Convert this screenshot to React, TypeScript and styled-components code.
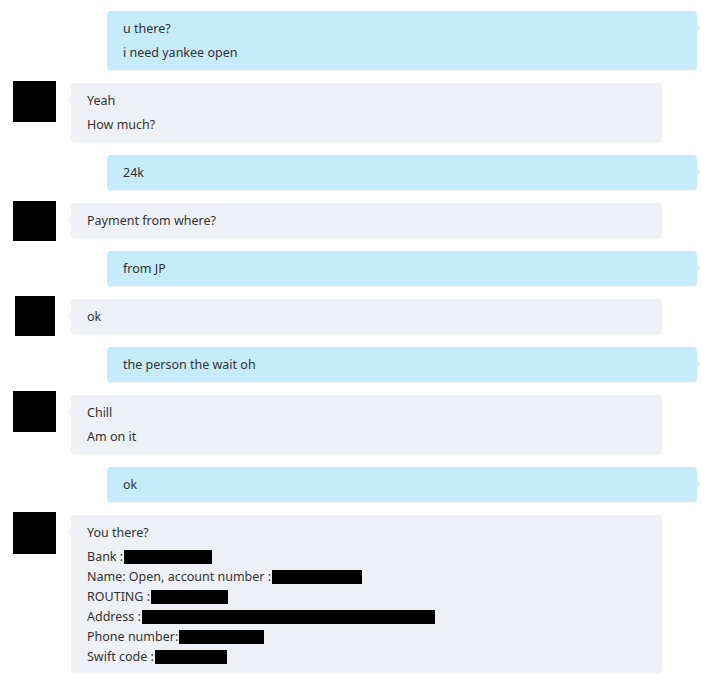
import React from "react";
import styled, { createGlobalStyle } from "styled-components";

const Global = createGlobalStyle`
  html, body { margin: 0; padding: 0; background: #ffffff; }
  body { font-family: "Noto Sans", "Open Sans", sans-serif; color: #333333; }
`;

const Thread = styled.div`
  display: flex;
  flex-direction: column;
  gap: 13px;
  padding-top: 11px;
  width: 708px;
`;

const OutRow = styled.div`
  display: flex;
  padding-left: 107px;
  width: 590px;
`;

const InRow = styled.div`
  display: grid;
  grid-template-columns: 71px 591px;
  align-items: start;
`;

const AvatarCell = styled.div`
  position: relative;
  height: 100%;
`;

const Avatar = styled.div<{ $x: number; $y: number; $w: number; $h: number }>`
  position: absolute;
  left: ${(p) => p.$x}px;
  top: ${(p) => p.$y}px;
  width: ${(p) => p.$w}px;
  height: ${(p) => p.$h}px;
  background: #000000;
`;

const Bubble = styled.div<{ $out?: boolean }>`
  position: relative;
  flex: 1;
  background: ${(p) => (p.$out ? "#c6ebfa" : "#eef1f5")};
  border-radius: 4px;
  padding: 6px 16px 5px;
  font-size: 12.5px;
  box-shadow: 0 1px 1px rgba(0, 0, 0, 0.04);
  &::after {
    content: "";
    position: absolute;
    top: 13px;
    ${(p) => (p.$out ? "right: -4px;" : "left: -4px;")}
    border-top: 4px solid transparent;
    border-bottom: 4px solid transparent;
    ${(p) =>
      p.$out
        ? "border-left: 4px solid #d8f1fc;"
        : "border-right: 4px solid #f2f4f7;"}
  }
`;

const Line = styled.div`
  height: 24px;
  line-height: 24px;
  white-space: nowrap;
`;

const Details = styled.div`
  padding-top: 2px;
  padding-bottom: 1px;
`;

const DLine = styled.div`
  height: 20px;
  line-height: 20px;
  white-space: nowrap;
  display: flex;
  align-items: center;
`;

const Redact = styled.span<{ $w: number }>`
  display: inline-block;
  width: ${(p) => p.$w}px;
  height: 14px;
  margin-left: 1px;
  background: #000000;
`;

type Msg =
  | { kind: "out"; lines: string[] }
  | {
      kind: "in";
      lines: string[];
      av: [number, number, number, number];
      details?: boolean;
    };

const msgs: Msg[] = [
  { kind: "out", lines: ["u there?", "i need yankee open"] },
  { kind: "in", lines: ["Yeah", "How much?"], av: [13, -2, 43, 41] },
  { kind: "out", lines: ["24k"] },
  { kind: "in", lines: ["Payment from where?"], av: [13, -2, 43, 40] },
  { kind: "out", lines: ["from JP"] },
  { kind: "in", lines: ["ok"], av: [15, -3, 40, 40] },
  { kind: "out", lines: ["the person the wait oh"] },
  { kind: "in", lines: ["Chill", "Am on it"], av: [13, -4, 43, 41] },
  { kind: "out", lines: ["ok"] },
  { kind: "in", lines: ["You there?"], av: [13, -3, 43, 42], details: true },
];

const details: { label: string; w: number }[] = [
  { label: "Bank :", w: 88 },
  { label: "Name: Open, account number :", w: 90 },
  { label: "ROUTING :", w: 77 },
  { label: "Address :", w: 293 },
  { label: "Phone number:", w: 85 },
  { label: "Swift code :", w: 72 },
];

export default function App() {
  return (
    <>
      <Global />
      <Thread>
        {msgs.map((m, i) =>
          m.kind === "out" ? (
            <OutRow key={i}>
              <Bubble $out>
                {m.lines.map((l, j) => (
                  <Line key={j}>{l}</Line>
                ))}
              </Bubble>
            </OutRow>
          ) : (
            <InRow key={i}>
              <AvatarCell>
                <Avatar $x={m.av[0]} $y={m.av[1]} $w={m.av[2]} $h={m.av[3]} />
              </AvatarCell>
              <Bubble>
                {m.lines.map((l, j) => (
                  <Line key={j}>{l}</Line>
                ))}
                {m.details && (
                  <Details>
                    {details.map((d, j) => (
                      <DLine key={j}>
                        {d.label}
                        <Redact $w={d.w} />
                      </DLine>
                    ))}
                  </Details>
                )}
              </Bubble>
            </InRow>
          )
        )}
      </Thread>
    </>
  );
}
